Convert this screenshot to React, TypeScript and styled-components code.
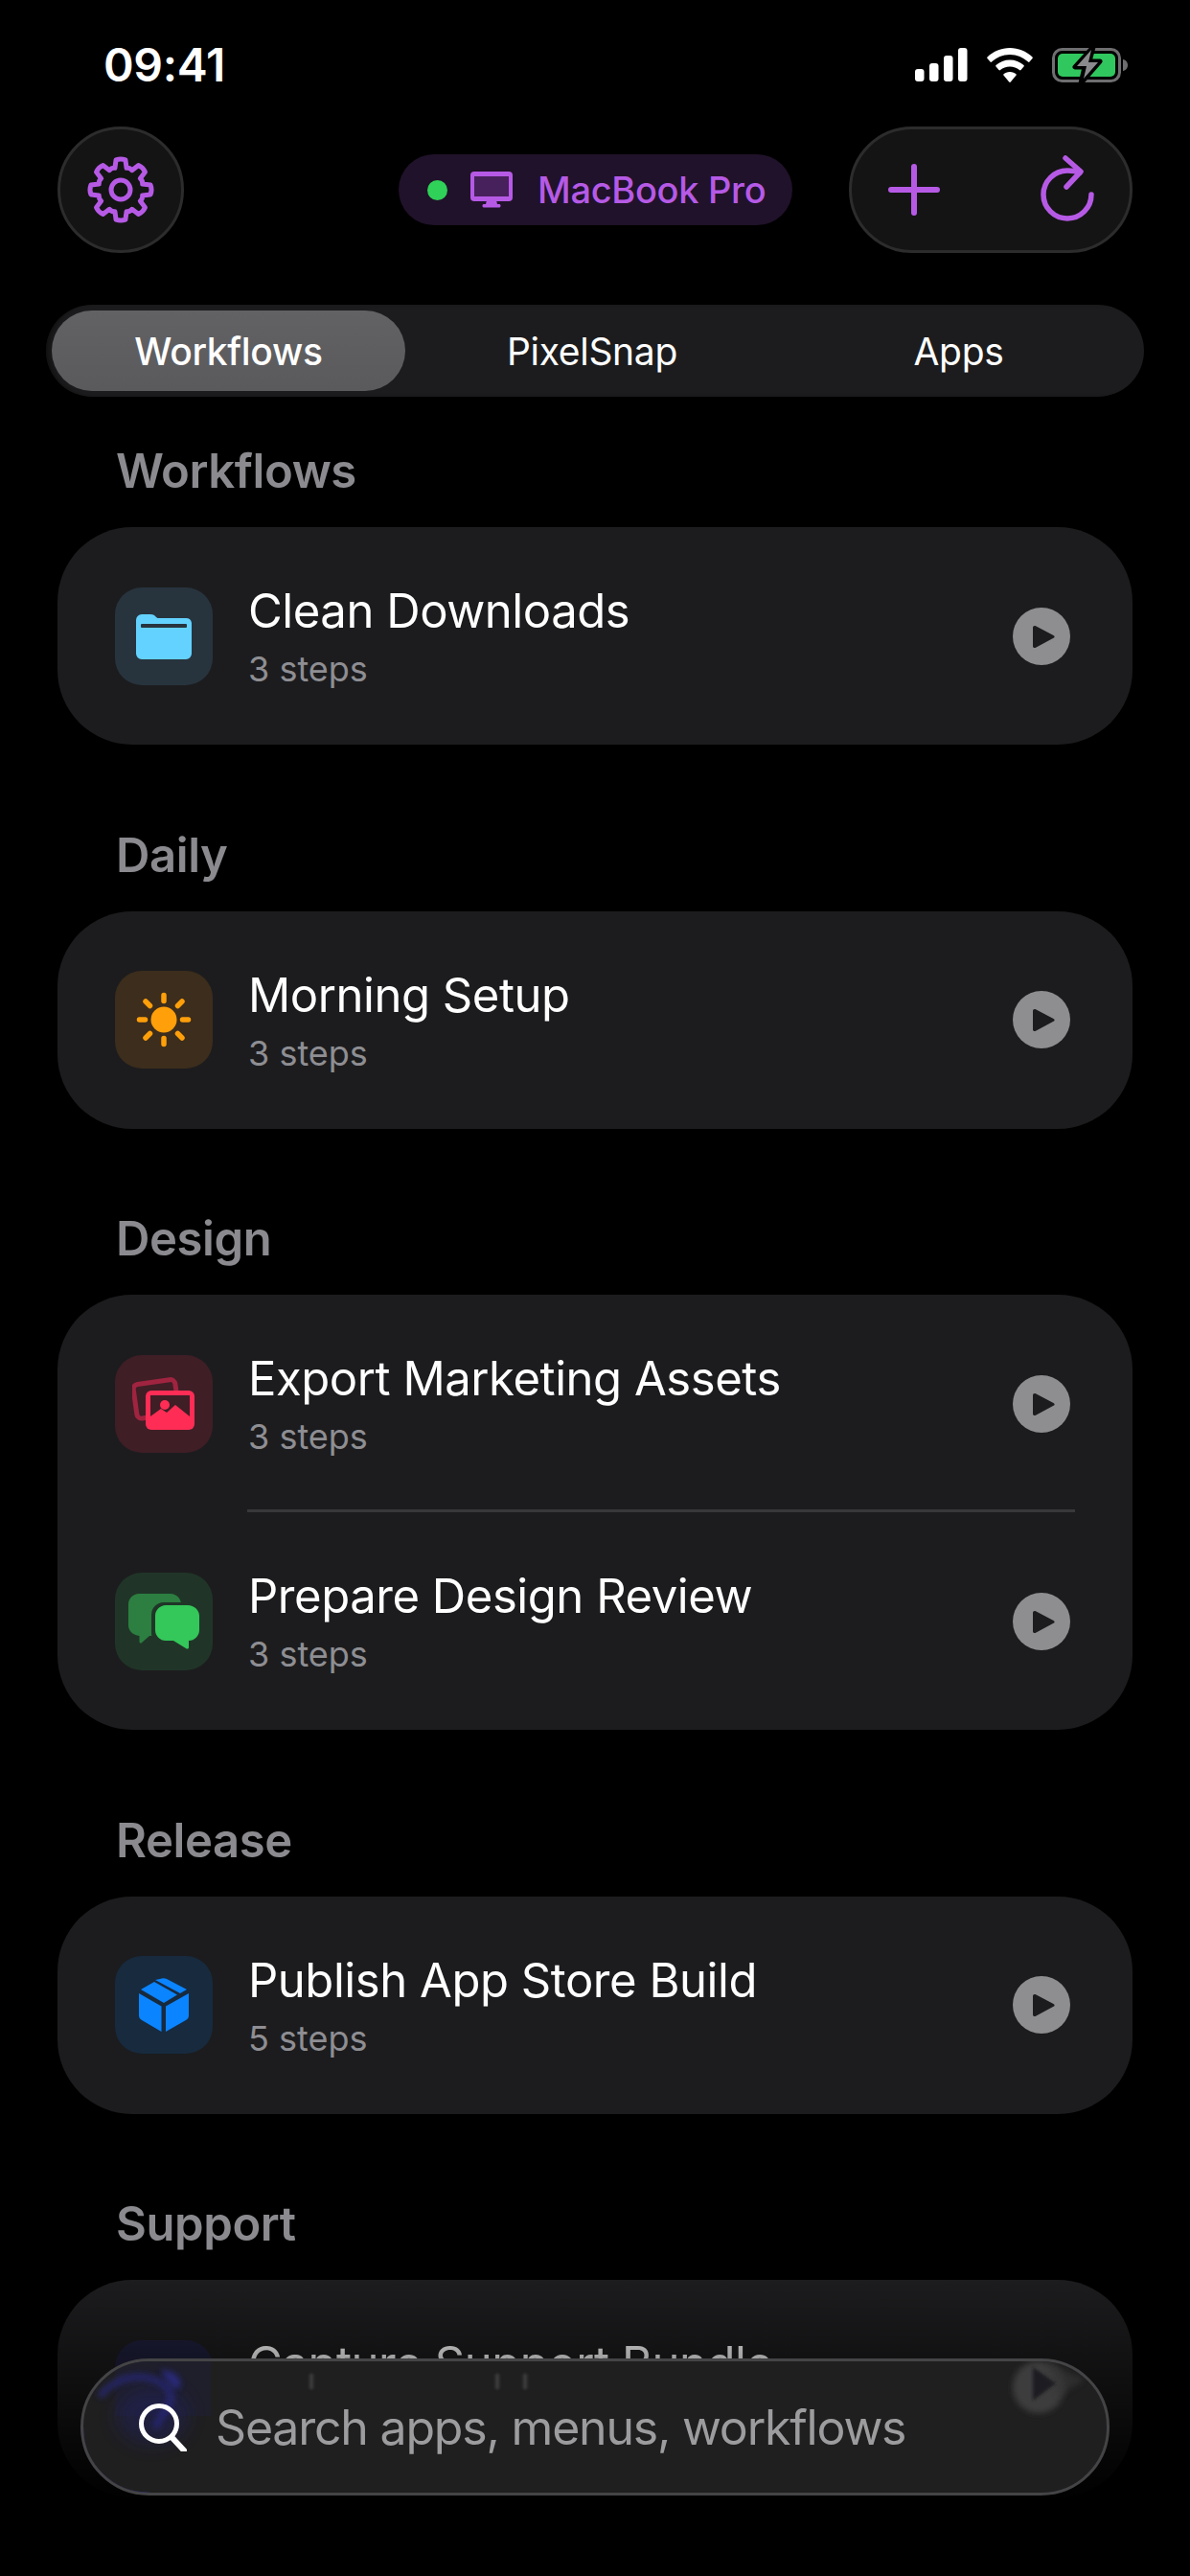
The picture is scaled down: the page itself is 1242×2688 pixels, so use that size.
import React from "react";
import styled, { createGlobalStyle } from "styled-components";

const GlobalStyle = createGlobalStyle`
	html, body {
		margin: 0;
		padding: 0;
		background: #000;
	}
	* {
		box-sizing: border-box;
	}
`;

const accent = "#b65ae6";

const Screen = styled.div`
	position: relative;
	width: 1242px;
	height: 2688px;
	overflow: hidden;
	background: #000;
	color: #fff;
	font-family: Inter, "Liberation Sans", sans-serif;
`;

const StatusBar = styled.div`
	display: flex;
	align-items: center;
	justify-content: space-between;
	height: 37px;
	margin-top: 49px;
	padding: 0 64px 0 108px;
`;

const Clock = styled.div`
	font-size: 48px;
	font-weight: 600;
	letter-spacing: -0.3px;
	line-height: 37px;
`;

const StatusIcons = styled.div`
	display: flex;
	align-items: center;
	gap: 20px;
`;

const Header = styled.div`
	display: flex;
	align-items: center;
	height: 132px;
	margin-top: 46px;
	padding: 0 60px;
`;

const RoundButton = styled.div`
	display: flex;
	align-items: center;
	justify-content: center;
	width: 132px;
	height: 132px;
	border-radius: 50%;
	background: #141414;
	border: 3px solid #2c2c2c;
`;

const DevicePill = styled.div`
	display: flex;
	align-items: center;
	height: 74px;
	width: 411px;
	margin-left: 224px;
	padding-left: 30px;
	border-radius: 37px;
	background: #20122a;
	color: ${accent};
	font-size: 38px;
	font-weight: 500;
`;

const StatusDot = styled.span`
	width: 21px;
	height: 21px;
	border-radius: 50%;
	background: #30d158;
`;

const DeviceName = styled.span`
	margin-left: 26px;
	letter-spacing: -0.3px;
`;

const ActionGroup = styled.div`
	display: flex;
	align-items: center;
	justify-content: space-between;
	width: 296px;
	height: 132px;
	margin-left: auto;
	padding: 0 35px 0 38px;
	border-radius: 66px;
	background: #141414;
	border: 3px solid #2c2c2c;
`;

const Tabs = styled.div`
	display: grid;
	grid-template-columns: 369px 390px 375px;
	align-items: center;
	height: 96px;
	margin: 54px 48px 0;
	padding: 6px;
	border-radius: 48px;
	background: #1c1c1e;
	box-shadow: inset 6px 0 6px -4px #0d0d0d;
`;

const Tab = styled.div<{ $active?: boolean }>`
	display: flex;
	align-items: center;
	justify-content: center;
	height: 84px;
	border-radius: 42px;
	font-size: 39px;
	font-weight: ${(p) => (p.$active ? 500 : 400)};
	letter-spacing: -0.3px;
	background: ${(p) => (p.$active ? "linear-gradient(#626265, #5a5a5d)" : "transparent")};
`;

const List = styled.div`
	display: flex;
	flex-direction: column;
	padding: 0 60px;
`;

const SectionTitle = styled.div`
	display: flex;
	align-items: flex-end;
	height: 173.5px;
	padding: 0 0 29px 61px;
	font-size: 49px;
	font-weight: 600;
	line-height: 58px;
	letter-spacing: -0.4px;
	color: #8a8a8f;
`;

const FirstSectionTitle = styled(SectionTitle)`
	height: 136px;
`;

const Card = styled.div`
	border-radius: 78px;
	background: #1c1c1e;
`;

const Row = styled.div`
	display: flex;
	align-items: center;
	height: 227px;
	padding: 0 65px 0 60px;
`;

const Separator = styled.div`
	height: 3px;
	margin: -3px 60px 0 198px;
	background: #38383a;
`;

const IconTile = styled.div<{ $tint: string }>`
	display: flex;
	align-items: center;
	justify-content: center;
	width: 102px;
	height: 102px;
	flex-shrink: 0;
	border-radius: 28px;
	background: ${(p) => p.$tint};
`;

const RowText = styled.div`
	display: flex;
	flex-direction: column;
	flex: 1;
	margin-left: 37px;
`;

const RowTitle = styled.div`
	font-size: 49px;
	font-weight: 400;
	line-height: 60px;
	letter-spacing: -0.45px;
`;

const RowSteps = styled.div`
	margin-top: 9px;
	font-size: 36px;
	line-height: 42px;
	color: #8e8e93;
`;

const BottomFade = styled.div`
	position: absolute;
	left: 0;
	right: 0;
	top: 2379px;
	height: 309px;
	background: linear-gradient(rgba(0, 0, 0, 0) 0%, rgba(0, 0, 0, 0.35) 25%, #000 76%);
`;

const SearchBar = styled.div`
	position: absolute;
	left: 84px;
	top: 2461px;
	display: flex;
	align-items: center;
	width: 1074px;
	height: 143px;
	padding-left: 58px;
	border-radius: 72px;
	overflow: hidden;
	background: #1f1f20;
	border: 3px solid #444446;
`;

const SearchGlow = styled.svg`
	position: absolute;
	left: -3px;
	top: -3px;
`;

const SearchText = styled.span`
	position: relative;
	margin-left: 30px;
	font-size: 50px;
	letter-spacing: -1.2px;
	color: #9c9c9e;
`;

const SearchIconWrap = styled.span`
	position: relative;
	display: flex;
`;

// outline of the 8 tooth gear, centre 41,41
const gearPath = Array.from({ length: 8 }, (_, k) => {
	const a = (k * Math.PI) / 4 - Math.PI / 2;
	const pt = (r: number, d: number) => {
		const t = a + (d * Math.PI) / 180;
		return `${(41 + r * Math.cos(t)).toFixed(2)} ${(41 + r * Math.sin(t)).toFixed(2)}`;
	};
	return `${k === 0 ? "M" : "L"}${pt(23.5, -15)} L${pt(31.5, -9)} Q${pt(33, 0)} ${pt(31.5, 9)} L${pt(23.5, 15)} Q${pt(25, 22.5)} ${pt(23.5, 30)}`;
}).join(" ");

const GearIcon = () => (
	<svg width="82" height="82" viewBox="0 0 82 82" fill="none" stroke={accent} strokeWidth="5" strokeLinejoin="round">
		<path d={`${gearPath} Z`} />
		<circle cx="41" cy="41" r="10" />
	</svg>
);

const MonitorIcon = () => (
	<svg width="44" height="38" viewBox="0 0 44 38" style={{ marginLeft: 24 }}>
		<rect x="0" y="0" width="44" height="31" rx="4" fill={accent} />
		<rect x="4" y="5" width="36" height="21" fill="#47215c" />
		<path d="M17 30h10l1 4h2.500a2 2 0 0 1 0 3.500h-17a2 2 0 0 1 0-3.500H16z" fill={accent} />
	</svg>
);

const PlusIcon = () => (
	<svg width="54" height="54" viewBox="0 0 54 54" stroke={accent} strokeWidth="6" strokeLinecap="round">
		<path d="M27 3v48M3 27h48" />
	</svg>
);

const RefreshIcon = () => (
	<svg width="60" height="72" viewBox="0 0 60 72" fill="none" stroke={accent} strokeWidth="5.500" strokeLinecap="round" strokeLinejoin="round">
		<path d="M43 18C39 16.500 35 16 30 16A25 25 0 1 0 55 41" />
		<path d="M28 3l16 14-15 16" />
	</svg>
);

const SignalIcon = () => (
	<svg width="55" height="35" viewBox="0 0 55 35" fill="#fff">
		<rect x="0" y="22" width="9.500" height="13" rx="3" />
		<rect x="15" y="16" width="9.500" height="19" rx="3" />
		<rect x="30" y="8" width="9.500" height="27" rx="3" />
		<rect x="45" y="0" width="9.500" height="35" rx="3" />
	</svg>
);

const WifiIcon = () => (
	<svg width="48" height="36" viewBox="0 0 48 36" fill="#fff">
		<path d="M24 0c9 0 17 3.500 23.500 9.500.5.500.5 1 0 1.500l-3 3.500c-.5.500-1 .5-1.500 0C38 10 31.500 7 24 7S10 10 5 14.500c-.5.500-1 .5-1.500 0L.5 11c-.5-.5-.5-1 0-1.500C7 3.500 15 0 24 0z" />
		<path d="M24 12.500c5.500 0 10.500 2 14.500 5.500.5.500.5 1 0 1.500l-3 3.500c-.5.500-1 .5-1.500 0-2.800-2.300-6-3.500-10-3.500s-7.200 1.200-10 3.500c-.5.500-1 .5-1.500 0l-3-3.500c-.5-.5-.5-1 0-1.500 4-3.500 9-5.500 14.500-5.500z" />
		<path d="M24 25c2.800 0 5 1 6.500 2.300.4.400.4.900.1 1.300l-5.800 6.900c-.4.500-1.200.5-1.600 0l-5.800-6.900c-.3-.4-.3-.9.100-1.300C19 26 21.200 25 24 25z" />
	</svg>
);

const BatteryIcon = () => (
	<svg width="80" height="38" viewBox="0 0 80 38">
		<rect x="1.500" y="2.500" width="69" height="33" rx="9" fill="none" stroke="#6e6e70" strokeWidth="3" />
		<rect x="6" y="7" width="60" height="24" rx="5" fill="#30c75e" />
		<path d="M74 13c3 .5 5 3 5 6s-2 5.500-5 6z" fill="#6e6e70" />
		<path d="M43 0L24 21h10l-4 17 20-23H39z" fill="#000" stroke="#000" strokeWidth="5" strokeLinejoin="round" />
		<path d="M41 3L26 20h10l-3 13 15-17H38z" fill="#8a8a8c" />
	</svg>
);

const FolderIcon = () => (
	<svg width="58" height="48" viewBox="0 0 58 48">
		<path d="M0 7a6 6 0 0 1 6-6h9c3 0 4.500 1 6 3l1.500 1H52a6 6 0 0 1 6 5v32a6 6 0 0 1-6 6H6a6 6 0 0 1-6-6z" fill="#64d2ff" />
		<rect x="5" y="11" width="48" height="4" rx="1" fill="#27343e" />
	</svg>
);

const SunIcon = () => (
	<svg width="58" height="58" viewBox="0 0 58 58" fill="#ff9f0a" stroke="#ff9f0a" strokeWidth="5.500" strokeLinecap="round">
		<circle cx="29" cy="29" r="13.500" stroke="none" />
		<path d="M29 3.500v6M29 48.500v6M3.500 29h6M48.500 29h6M10 10l4.500 4.500M43.500 43.500L48 48M10 48l4.500-4.500M43.500 14.500L48 10" />
	</svg>
);

const PhotosIcon = () => (
	<svg width="66" height="56" viewBox="0 0 66 56">
		<g transform="rotate(-8 24 24)">
			<rect x="3" y="5" width="44" height="36" rx="5" fill="none" stroke="#a0243f" strokeWidth="5" />
		</g>
		<rect x="14" y="14" width="51" height="41" rx="6" fill="#ff2d55" />
		<rect x="19" y="19" width="41" height="22" fill="#3f1e26" />
		<path d="M19 41l11-8 6 4 9-8 15 12v3H19z" fill="#ff2d55" />
		<circle cx="34" cy="29" r="5" fill="#ff2d55" />
	</svg>
);

const ChatIcon = () => (
	<svg width="74" height="58" viewBox="0 0 74 58">
		<path d="M11 0h33c6 0 11 5 11 11v22c0 6-5 11-11 11H22L14 51c-1 1-2.500.5-2.500-1v-6C5 43 0 39 0 33V11C0 5 5 0 11 0z" fill="#2c7f40" />
		<rect x="24" y="9" width="50" height="45" rx="13" fill="#203528" />
		<path d="M39 12h23c6.500 0 12 5 12 11v15c0 6-5 11-11 11v7c0 1.500-1.500 2-3 1L47 49h-8c-6 0-11-5-11-11V23c0-6 5-11 11-11z" fill="#34c759" />
	</svg>
);

const BoxIcon = () => (
	<svg width="52" height="56" viewBox="0 0 52 56" fill="#0a84ff">
		<path d="M0 16l23.500 13.500V56L3 44c-2-1-3-3-3-5z" />
		<path d="M52 16L28 29.500V56l21-12c2-1 3-3 3-5z" />
		<path d="M2 12l14-8 24 13.500L26 26z" />
		<path d="M22 1c2-1 5-1 7 0l21 11-7 4-26-14z" />
	</svg>
);

const PlayButton = () => (
	<svg width="60" height="60" viewBox="0 0 60 60">
		<circle cx="30" cy="30" r="30" fill="#8e8e90" />
		<path d="M21 21c0-2 1.500-2.500 3-1.800l18.500 9.800c1.500.8 1.500 2 0 2.800L24 41.800c-1.500.7-3 .2-3-1.800z" fill="#1c1c1e" />
	</svg>
);

const SearchIcon = () => (
	<svg width="50" height="50" viewBox="0 0 50 50" fill="none" stroke="#fff" strokeLinecap="round">
		<circle cx="21" cy="21" r="18.500" strokeWidth="5" />
		<path d="M35 36l12 13" strokeWidth="6" />
	</svg>
);

type Workflow = { title: string; steps: number; tint: string; icon?: React.ReactNode };

const WorkflowRow = ({ title, steps, tint, icon }: Workflow) => (
	<Row>
		<IconTile $tint={tint}>{icon}</IconTile>
		<RowText>
			<RowTitle>{title}</RowTitle>
			<RowSteps>{steps} steps</RowSteps>
		</RowText>
		<PlayButton />
	</Row>
);

const sections: { name: string; rows: Workflow[] }[] = [
	{ name: "Workflows", rows: [{ title: "Clean Downloads", steps: 3, tint: "#27343e", icon: <FolderIcon /> }] },
	{ name: "Daily", rows: [{ title: "Morning Setup", steps: 3, tint: "#3c2d1c", icon: <SunIcon /> }] },
	{
		name: "Design",
		rows: [
			{ title: "Export Marketing Assets", steps: 3, tint: "#3f1e26", icon: <PhotosIcon /> },
			{ title: "Prepare Design Review", steps: 3, tint: "#203528", icon: <ChatIcon /> },
		],
	},
	{ name: "Release", rows: [{ title: "Publish App Store Build", steps: 5, tint: "#172a3e", icon: <BoxIcon /> }] },
	{ name: "Support", rows: [{ title: "Capture Support Bundle", steps: 3, tint: "#1f1f3c" }] },
];

export default function App() {
	return (
		<Screen>
			<GlobalStyle />
			<StatusBar>
				<Clock>09:41</Clock>
				<StatusIcons>
					<SignalIcon />
					<WifiIcon />
					<BatteryIcon />
				</StatusIcons>
			</StatusBar>
			<Header>
				<RoundButton>
					<GearIcon />
				</RoundButton>
				<DevicePill>
					<StatusDot />
					<MonitorIcon />
					<DeviceName>MacBook Pro</DeviceName>
				</DevicePill>
				<ActionGroup>
					<PlusIcon />
					<RefreshIcon />
				</ActionGroup>
			</Header>
			<Tabs>
				<Tab $active>Workflows</Tab>
				<Tab>PixelSnap</Tab>
				<Tab>Apps</Tab>
			</Tabs>
			<List>
				{sections.map((section, i) => {
					const Title = i === 0 ? FirstSectionTitle : SectionTitle;
					return (
						<React.Fragment key={section.name}>
							<Title>{section.name}</Title>
							<Card>
								{section.rows.map((row, j) => (
									<React.Fragment key={row.title}>
										{j > 0 && <Separator />}
										<WorkflowRow {...row} />
									</React.Fragment>
								))}
							</Card>
						</React.Fragment>
					);
				})}
			</List>
			<BottomFade />
			<SearchBar>
				<SearchGlow width="1074" height="143" viewBox="0 0 1074 143">
					<defs>
						<filter id="soft" x="-50%" y="-50%" width="200%" height="200%">
							<feGaussianBlur stdDeviation="9" />
						</filter>
						<filter id="softer" x="-50%" y="-50%" width="200%" height="200%">
							<feGaussianBlur stdDeviation="3" />
						</filter>
						<filter id="thin" x="-200%" y="-50%" width="500%" height="200%">
							<feGaussianBlur stdDeviation="1.500" />
						</filter>
					</defs>
					<rect x="36" y="0" width="100" height="60" fill="#1f1f3c" opacity="0.45" />
					<ellipse cx="75" cy="60" rx="38" ry="30" fill="#24246a" opacity="0.4" filter="url(#soft)" />
					<path d="M20 40C40 14 75 14 92 32C100 46 84 58 78 72" fill="none" stroke="#2c2c86" strokeWidth="7" opacity="0.7" filter="url(#softer)" />
					<path d="M84 12C96 12 108 20 104 30C100 36 94 26 88 20z" fill="#2e2e96" opacity="0.75" filter="url(#softer)" />
					<path d="M72 141C32 141 2 110 2 72" fill="none" stroke="#3d3d8e" strokeWidth="2.500" opacity="0.8" />
					<g fill="#4c4c4c" opacity="0.7">
						<rect x="239" y="16" width="4" height="16" filter="url(#thin)" />
						<rect x="433" y="16" width="4" height="16" filter="url(#thin)" />
						<rect x="462" y="16" width="4" height="16" filter="url(#thin)" />
					</g>
					<circle cx="1000" cy="30" r="27" fill="#3e3e3e" filter="url(#softer)" />
					<path d="M1010 4L1048 22L1020 40z" fill="#363636" opacity="0.7" filter="url(#softer)" />
					<path d="M994 9L1018 26L994 44z" fill="#1f1f20" filter="url(#thin)" />
				</SearchGlow>
				<SearchIconWrap>
					<SearchIcon />
				</SearchIconWrap>
				<SearchText>Search apps, menus, workflows</SearchText>
			</SearchBar>
		</Screen>
	);
}
